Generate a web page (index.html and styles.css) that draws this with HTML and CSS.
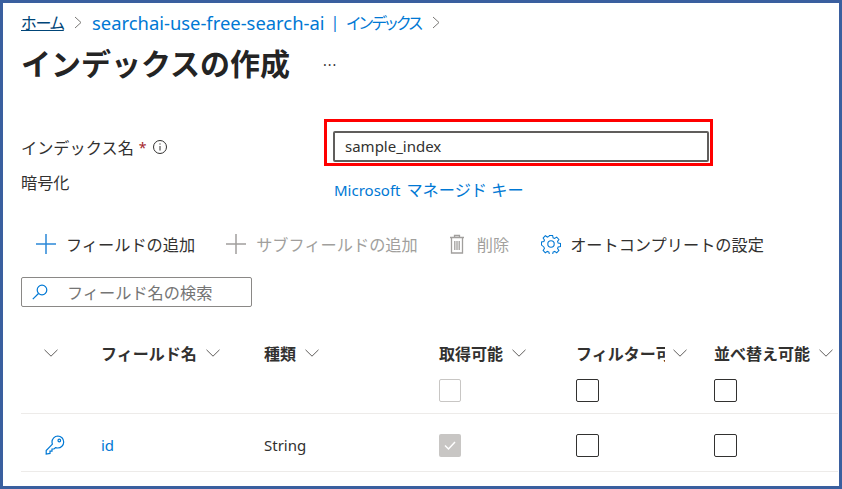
FILE: index.html
```html
<!DOCTYPE html>
<html lang="ja">
<head>
  <meta charset="UTF-8">
  <title>インデックスの作成</title>
  <link rel="stylesheet" href="styles.css">
</head>
<body>
  <div class="frame">
    <nav class="breadcrumb">
      <a class="crumb-home">ホーム</a>
      <svg class="crumb-sep" viewBox="0 0 8 13"><path d="M1 1l6 5.500-6 5.500"/></svg>
      <a class="crumb-link">searchai-use-free-search-ai</a>
      <span class="crumb-bar">|</span>
      <a class="crumb-link crumb-kana">インデックス</a>
      <svg class="crumb-sep" viewBox="0 0 8 13"><path d="M1 1l6 5.500-6 5.500"/></svg>
    </nav>

    <div class="title-row">
      <h1>インデックスの作成</h1>
      <span class="more">···</span>
    </div>

    <div class="form">
      <div class="form-label form-label-name">
        インデックス名 <span class="req">*</span>
        <svg class="info" viewBox="0 0 16 16"><circle cx="8" cy="8" r="6.500"/><path d="M8 7v4.500"/><path d="M8 4.400v1.200"/></svg>
      </div>
      <div class="highlight">
        <div class="input">sample_index</div>
      </div>
      <div class="form-label form-label-enc">暗号化</div>
      <a class="form-link">Microsoft <span class="form-link-kana">マネージド キー</span></a>
    </div>

    <div class="toolbar">
      <button class="tool tool-add">
        <svg class="tool-icon plus" viewBox="0 0 20 20"><path d="M10 0v20M0 10h20"/></svg>
        フィールドの追加
      </button>
      <button class="tool tool-sub off">
        <svg class="tool-icon plus" viewBox="0 0 20 20"><path d="M10 0v20M0 10h20"/></svg>
        サブフィールドの追加
      </button>
      <button class="tool tool-del off">
        <svg class="tool-icon trash" viewBox="0 0 16 20"><path d="M1 3.500h14M5.500 3.500V1.500h5v2M2.500 3.500v15.500h11V3.500M5.800 7v9M8 7v9M10.200 7v9"/></svg>
        削除
      </button>
      <button class="tool tool-gear">
        <svg class="tool-icon gear" viewBox="0 0 20 20"><path d="M8.300 1h3.400l.5 2.500 1.600.7 2.200-1.400 2.300 2.400-1.400 2.100.6 1.600 2.500.5v3.200l-2.500.5-.6 1.600 1.400 2.100-2.300 2.400-2.200-1.400-1.600.7-.5 2.500H8.300l-.5-2.500-1.600-.7-2.200 1.400-2.300-2.400 1.400-2.100-.6-1.600L0 11.100V7.900l2.500-.5.600-1.600-1.400-2.100L4 1.300l2.200 1.400 1.600-.7z" transform="translate(.5 .5) scale(.95)"/><circle cx="10" cy="10" r="3.200"/></svg>
        オートコンプリートの設定
      </button>
    </div>

    <div class="search">
      <svg class="search-icon" viewBox="0 0 16 16"><circle cx="10" cy="6" r="4.800"/><path d="M6.500 9.500L.8 15.200"/></svg>
      <span>フィールド名の検索</span>
    </div>

    <div class="table">
      <div class="row row-head">
        <div class="cell"><svg class="chev" viewBox="0 0 14 8"><path d="M.5.800L7 7.200 13.500.8"/></svg></div>
        <div class="cell">フィールド名<svg class="chev" viewBox="0 0 14 8"><path d="M.5.800L7 7.200 13.500.8"/></svg></div>
        <div class="cell">種類<svg class="chev" viewBox="0 0 14 8"><path d="M.5.800L7 7.200 13.500.8"/></svg></div>
        <div class="cell cell-retrieve">取得可能<svg class="chev" viewBox="0 0 14 8"><path d="M.5.800L7 7.200 13.500.8"/></svg></div>
        <div class="cell"><span class="clip">フィルター可能</span><svg class="chev" viewBox="0 0 14 8"><path d="M.5.800L7 7.200 13.500.8"/></svg></div>
        <div class="cell">並べ替え可能<svg class="chev" viewBox="0 0 14 8"><path d="M.5.800L7 7.200 13.500.8"/></svg></div>
      </div>
      <div class="row row-boxes">
        <div></div><div></div><div></div>
        <div class="cell cell-retrieve"><span class="check check-off"></span></div>
        <div class="cell"><span class="check"></span></div>
        <div class="cell"><span class="check"></span></div>
      </div>
      <div class="row row-data">
        <div class="cell">
          <svg class="key" viewBox="0 0 20 20"><path d="M12.800 1a6 6 0 0 1 5.900 6c0 3.400-2.700 6-6 6-.8 0-1.500-.1-2.200-.4L9 14H7v2.200H5v2.200L1.200 19V15.600l6.200-6.400c-.2-.7-.4-1.500-.4-2.200a6 6 0 0 1 5.800-6z"/><circle cx="14.300" cy="5.500" r="1.300"/></svg>
        </div>
        <div class="cell"><a class="field-link">id</a></div>
        <div class="cell">String</div>
        <div class="cell cell-retrieve"><span class="check check-on"><svg viewBox="0 0 14 14"><path d="M2 7.500l3.500 3.500L12 4"/></svg></span></div>
        <div class="cell"><span class="check"></span></div>
        <div class="cell"><span class="check"></span></div>
      </div>
    </div>
  </div>
</body>
</html>
```

FILE: styles.css
```css
* {
  box-sizing: border-box;
  margin: 0;
  padding: 0;
}

body {
  background: #fff;
  color: #323130;
  font-family: "Noto Sans", "Noto Sans CJK JP", sans-serif;
  font-size: 15px;
}

.frame {
  width: 842px;
  height: 489px;
  border: 3px solid #3a5f9f;
  padding: 0 0 0 18px;
  overflow: hidden;
}

svg {
  fill: none;
  stroke: currentColor;
}

/* breadcrumb */
.breadcrumb {
  display: flex;
  align-items: center;
  height: 20px;
  margin-top: 9px;
  color: #0078d4;
  font-size: 18.400px;
  white-space: nowrap;
}

.crumb-home {
  color: #004578;
  text-decoration: underline;
  font-size: 16px;
  font-feature-settings: "palt";
  letter-spacing: -1px;
  width: 43px;
}

.crumb-sep {
  width: 8px;
  height: 13px;
  color: #797775;
  stroke-width: 1;
  margin: 0 10px;
}

.crumb-bar {
  margin: 0 7px 0 6px;
  font-size: 16px;
}

.crumb-kana {
  font-size: 16px;
  font-feature-settings: "palt";
  letter-spacing: -1.500px;
  width: 76px;
}

/* title */
.title-row {
  display: flex;
  align-items: center;
  margin-top: 12px;
}

h1 {
  font-size: 30px;
  font-weight: 700;
  line-height: 40px;
  color: #242424;
}

.more {
  margin-left: 33px;
  font-size: 14px;
  color: #323130;
  letter-spacing: 1px;
}

/* form */
.form {
  display: grid;
  grid-template-columns: 303px 389px;
  margin-top: 35px;
}

.form-label {
  font-size: 16.200px;
}

.form-label-name {
  display: flex;
  align-items: center;
  gap: 5px;
  padding-top: 9px;
}

.req {
  color: #a4262c;
  font-size: 14px;
}

.info {
  width: 16px;
  height: 16px;
  stroke-width: 1;
}

.highlight {
  height: 47px;
  border: 3px solid #f00;
  padding: 9px 1px 2px 6px;
}

.input {
  height: 31px;
  border: 2px solid #605e5c;
  border-radius: 2px;
  padding: 0 10px;
  line-height: 27px;
  font-size: 15px;
}

.form-label-enc {
  margin-top: 4px;
}

.form-link {
  margin-top: 11px;
  margin-left: 10px;
  color: #0078d4;
  font-size: 15px;
}

.form-link-kana {
  margin-left: 2px;
  font-size: 16.200px;
}

/* toolbar */
.toolbar {
  display: flex;
  align-items: center;
  height: 24px;
  margin-top: 31px;
  padding-left: 15px;
}

.tool {
  display: flex;
  align-items: center;
  border: none;
  background: none;
  font: inherit;
  font-size: 16.200px;
  color: #323130;
}

.tool.off {
  color: #a19f9d;
}

.tool-icon {
  stroke-width: 1.500;
}

.plus {
  width: 20px;
  height: 20px;
  margin-right: 10px;
  color: #2b88d8;
  stroke-width: 1.500;
}

.off .plus {
  color: #a19f9d;
}

.tool-add {
  margin-right: 31px;
}

.tool-sub {
  margin-right: 31px;
}

.trash {
  width: 16px;
  height: 20px;
  margin-right: 12px;
  stroke-width: 1.300;
}

.tool-del {
  margin-right: 32px;
}

.gear {
  width: 20px;
  height: 20px;
  margin-right: 9px;
  color: #0078d4;
  stroke-width: 1.100;
}

/* search */
.search {
  display: flex;
  align-items: center;
  width: 231px;
  height: 30px;
  margin-top: 21px;
  border: 1px solid #8a8886;
  border-radius: 2px;
  padding-left: 10px;
  font-size: 16.200px;
  color: #757575;
}

.search-icon {
  width: 16px;
  height: 16px;
  margin-right: 19px;
  color: #0078d4;
  stroke-width: 1.200;
}

/* table */
.table {
  width: 817px;
  margin-top: 28px;
}

.row {
  display: grid;
  grid-template-columns: 80px 163px 174px 138px 138px 124px;
  align-items: center;
}

.cell {
  display: flex;
  align-items: center;
  white-space: nowrap;
}

.cell-retrieve {
  padding-left: 1px;
}

.row-head {
  height: 35px;
  font-size: 16px;
  font-weight: 700;
}

.row-head .cell:first-child {
  padding-left: 23px;
}

.chev {
  width: 14px;
  height: 8px;
  margin-left: 9px;
  stroke-width: 1;
  color: #605e5c;
}

.row-head .cell:first-child .chev {
  margin-left: 0;
}

.clip {
  width: 89px;
  overflow: hidden;
  margin-right: -1px;
}

.row-boxes {
  height: 44px;
  padding-bottom: 3px;
  border-bottom: 1px solid #edebe9;
}

.row-data {
  height: 58px;
  padding-top: 5px;
  border-bottom: 1px solid #edebe9;
  font-size: 15px;
}

.row-data .cell:first-child {
  padding-left: 24px;
}

.key {
  width: 20px;
  height: 20px;
  color: #0078d4;
  stroke-width: 1.200;
}

.field-link {
  color: #0078d4;
}

.check {
  display: block;
  width: 23px;
  height: 23px;
  border: 1px solid #323130;
  border-radius: 2px;
}

.check-off {
  width: 22px;
  border-color: #c8c6c4;
}

.check-on {
  width: 22px;
  border: none;
  background: #c8c6c4;
  color: #fff;
  padding: 4px;
}

.check-on svg {
  display: block;
  stroke-width: 1.500;
}
```
